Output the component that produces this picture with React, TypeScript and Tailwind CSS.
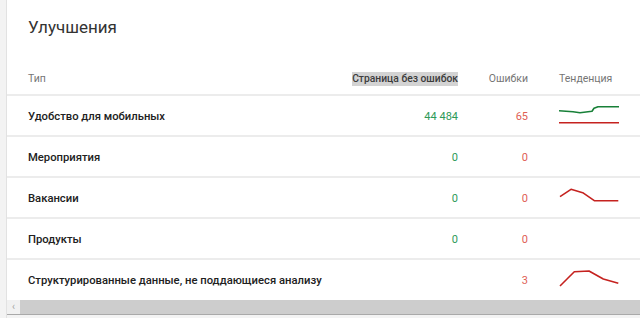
import React from "react";

type Row = {
  name: string;
  ok: string;
  errors: string;
  trend?: { color: string; points: string }[];
};

const rows: Row[] = [
  {
    name: "Удобство для мобильных",
    ok: "44 484",
    errors: "65",
    trend: [
      { color: "#188038", points: "0,14.7 14,15.7 21,16.7 33,15.3 35,12.3 39,10.7 60,10.7" },
      { color: "#c5221f", points: "0,26.7 60,26.7" },
    ],
  },
  { name: "Мероприятия", ok: "0", errors: "0" },
  {
    name: "Вакансии",
    ok: "0",
    errors: "0",
    trend: [{ color: "#c5221f", points: "1,18.7 12,11.3 23.7,14.7 35.3,22.7 59.3,22.7" }],
  },
  { name: "Продукты", ok: "0", errors: "0" },
  {
    name: "Структурированные данные, не поддающиеся анализу",
    ok: "",
    errors: "3",
    trend: [{ color: "#c5221f", points: "1,26 15.3,11.7 30,11 44.3,19 59.3,23.3" }],
  },
];

const Sparkline = ({ lines }: { lines: Row["trend"] }) => (
  <svg width="60" height="40" viewBox="0 0 60 40" className="block">
    {lines?.map((l, i) => (
      <polyline key={i} points={l.points} fill="none" stroke={l.color} strokeWidth="1.6" strokeLinejoin="round" />
    ))}
  </svg>
);

const App = () => {
  return (
    <div className="flex h-[318px] w-[640px] bg-[#f3f3f3] font-['Roboto',sans-serif]">
      <div className="w-[7px] shrink-0 border-r border-[#e2e2e2]" />
      <div className="flex flex-1 flex-col">
        <div className="bg-white">
          <h1 className="h-[54px] pl-[21px] pt-[14px] text-[17px] leading-[26px] text-[#333333]">Улучшения</h1>

          <div className="grid grid-cols-[1fr_auto_70px_112px] text-[11px]">
            <div className="h-[42px] border-b-2 border-[#ececec] pl-[21px] pt-[18px] text-[10.5px] leading-[14px] text-[#757575]">
              Тип
            </div>
            <div className="flex h-[42px] items-start justify-end border-b-2 border-[#ececec] pt-[18px]">
              <span className="bg-[#d3d3d3] text-[10.3px] font-medium leading-[14px] text-[#3c3c3c]">Страница без ошибок</span>
            </div>
            <div className="h-[42px] border-b-2 border-[#ececec] pt-[18px] text-right text-[10.5px] leading-[14px] text-[#757575]">
              Ошибки
            </div>
            <div className="h-[42px] border-b-2 border-[#ececec] pl-[31px] pt-[18px] text-[10.5px] leading-[14px] text-[#757575]">
              Тенденция
            </div>

            {rows.map((r, i) => {
              const last = i === rows.length - 1;
              const cell = last ? "h-[40px]" : "h-[41px] border-b-2 border-[#ececec]";
              return (
                <React.Fragment key={r.name}>
                  <div className={`flex items-center whitespace-nowrap pl-[21px] pt-[3px] text-[11.25px] font-medium text-[#212121] ${cell}`}>
                    {r.name}
                  </div>
                  <div className={`flex items-center justify-end pt-[3px] text-[#2e9a58] ${cell}`}>{r.ok}</div>
                  <div className={`flex items-center justify-end pt-[3px] text-[#e06055] ${cell}`}>{r.errors}</div>
                  <div className={`flex items-start pl-[31px] ${cell}`}>
                    {r.trend && <Sparkline lines={r.trend} />}
                  </div>
                </React.Fragment>
              );
            })}
          </div>
        </div>

        <div className="flex h-[15px] items-stretch border-b border-[#a9a9a9] bg-[#cdcdcd]">
          <div className="flex w-[13px] items-center justify-center bg-[#f1f1f1] text-[10px] leading-none text-[#a3a3a3]">
            ‹
          </div>
        </div>
      </div>
    </div>
  );
};

export default App;
